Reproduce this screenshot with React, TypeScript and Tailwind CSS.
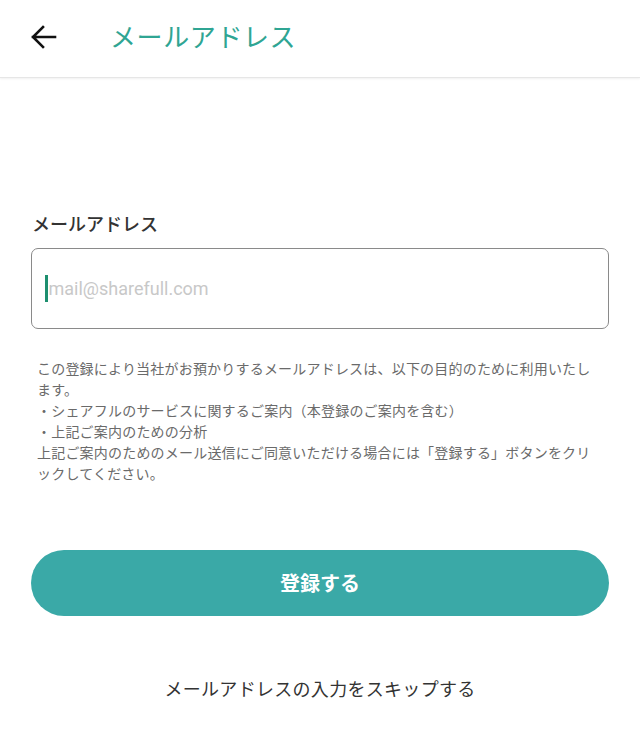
import React from "react";

export default function App() {
  const jp = { fontFamily: '"Noto Sans CJK JP", "Noto Sans", sans-serif' };
  return (
    <div className="w-[640px] h-[747px] bg-white overflow-hidden" style={jp}>
      <header className="h-[78px] flex items-center border-b border-[#e6e6e6] shadow-[0_1px_2px_rgba(0,0,0,0.06)]">
        <div className="w-[110px] flex items-center pl-[29px] pb-[3px]">
          <svg width="28" height="26" viewBox="0 0 28 26" fill="none">
            <path d="M26 13H4M14 3L4 13l10 10" stroke="#111" strokeWidth="2.6" strokeLinecap="square" />
          </svg>
        </div>
        <h1 className="text-[26px] leading-none text-[#2fa593] tracking-[0.6px] pb-[5px]">メールアドレス</h1>
      </header>

      <main className="px-[31px] pt-[131px]">
        <label className="block text-[18px] leading-[28px] font-medium text-[#333] pl-[1px]">メールアドレス</label>
        <div className="mt-[11px] h-[81px] border-[1.5px] border-[#8a8a8a] rounded-[7px] flex items-center pl-[13px]">
          <span className="w-[2.5px] h-[27px] bg-[#1d8f6f] mr-[1px]" />
          <span className="text-[18px] text-[#c8c8c8]" style={{ fontFamily: "Roboto, sans-serif" }}>
            mail@sharefull.com
          </span>
        </div>

        <p className="mt-[29px] ml-[6px] w-[560px] text-[14px] leading-[21px] text-[#6a6a6a] tracking-[0.2px]">
          この登録により当社がお預かりするメールアドレスは、以下の目的のために利用いたします。
          <br />
          ・シェアフルのサービスに関するご案内（本登録のご案内を含む）
          <br />
          ・上記ご案内のための分析
          <br />
          上記ご案内のためのメール送信にご同意いただける場合には「登録する」ボタンをクリックしてください。
        </p>

        <button className="mt-[66px] w-full h-[66px] rounded-full bg-[#3aa9a7] text-white text-[20px] font-bold">
          登録する
        </button>

        <div className="mt-[59px] text-center text-[18px] text-[#333] tracking-[0.3px]">メールアドレスの入力をスキップする</div>
      </main>
    </div>
  );
}
